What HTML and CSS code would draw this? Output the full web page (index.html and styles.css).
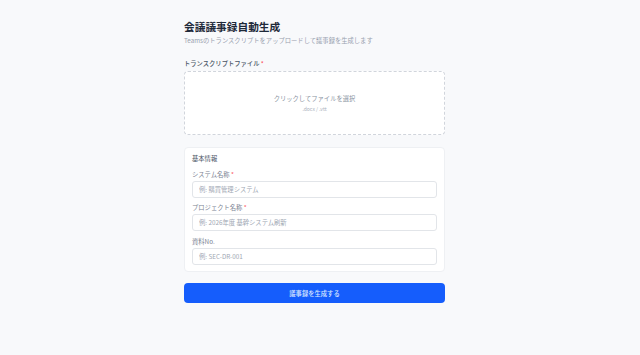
FILE: index.html
```html
<!DOCTYPE html>
<html lang="ja">
<head>
<meta charset="utf-8">
<title>会議議事録自動生成</title>
<link rel="stylesheet" href="styles.css">
</head>
<body>
<main class="page">
  <h1 class="title">会議議事録自動生成</h1>
  <p class="subtitle">Teamsのトランスクリプトをアップロードして議事録を生成します</p>

  <label class="label label-file">トランスクリプトファイル <span class="req">*</span></label>
  <div class="dropzone">
    <span class="drop-main">クリックしてファイルを選択</span>
    <span class="drop-sub">.docx / .vtt</span>
  </div>

  <section class="card">
    <h2 class="card-title">基本情報</h2>
    <div class="field">
      <label class="label">システム名称 <span class="req">*</span></label>
      <input class="input" type="text" placeholder="例: 購買管理システム">
    </div>
    <div class="field">
      <label class="label">プロジェクト名称 <span class="req">*</span></label>
      <input class="input" type="text" placeholder="例: 2026年度 基幹システム刷新">
    </div>
    <div class="field">
      <label class="label">資料No.</label>
      <input class="input" type="text" placeholder="例: SEC-DR-001">
    </div>
  </section>

  <button class="submit" type="button">議事録を生成する</button>
</main>
</body>
</html>
```

FILE: styles.css
```css
html, body {
  margin: 0;
  padding: 0;
  background: #f8f9fb;
  font-family: "Noto Sans CJK JP", "Noto Sans", sans-serif;
}

.page {
  width: 261px;
  margin-left: 184px;
  padding-top: 18px;
  display: flex;
  flex-direction: column;
}

.title {
  margin: 0;
  font-size: 10.7px;
  line-height: 18px;
  font-weight: 700;
  color: #1e2939;
}

.subtitle {
  margin: 0;
  font-size: 6.3px;
  line-height: 10px;
  color: #99a1af;
}

.label {
  display: block;
  font-size: 6.3px;
  line-height: 10px;
  font-weight: 400;
  color: #7a8291;
}

.label-file {
  margin-top: 13px;
  margin-bottom: 2px;
  font-weight: 500;
  color: #4a5565;
}

.req {
  color: #fb5a66;
}

.dropzone {
  box-sizing: border-box;
  height: 64px;
  background: #ffffff;
  border: 1px dashed #d1d5dc;
  border-radius: 4px;
  display: flex;
  flex-direction: column;
  align-items: center;
  justify-content: center;
}

.drop-main {
  font-size: 6.3px;
  line-height: 10px;
  color: #8a93a1;
}

.drop-sub {
  font-size: 5px;
  line-height: 9px;
  color: #a9b0bb;
}

.card {
  box-sizing: border-box;
  margin-top: 12px;
  background: #ffffff;
  border: 1px solid #eef0f3;
  border-radius: 4px;
  padding: 6px 7px 6.5px;
  display: flex;
  flex-direction: column;
  gap: 5.5px;
}

.card-title {
  margin: 0;
  font-size: 6.3px;
  line-height: 10px;
  font-weight: 400;
  color: #4a5565;
}

.field {
  display: flex;
  flex-direction: column;
  gap: 1px;
}

.input {
  box-sizing: border-box;
  height: 17px;
  width: 100%;
  margin: 0;
  padding: 0 6px;
  border: 1px solid #e2e5e9;
  border-radius: 3px;
  background: #ffffff;
  font-family: inherit;
  font-size: 6.3px;
  color: #1e2939;
  outline: none;
}

.input::placeholder {
  color: #a0a7b3;
}

.submit {
  margin-top: 11px;
  height: 20px;
  border: none;
  border-radius: 4px;
  background: #155dfc;
  color: #dbe6ff;
  font-family: inherit;
  font-size: 6.3px;
  font-weight: 500;
  padding: 0;
}
```
